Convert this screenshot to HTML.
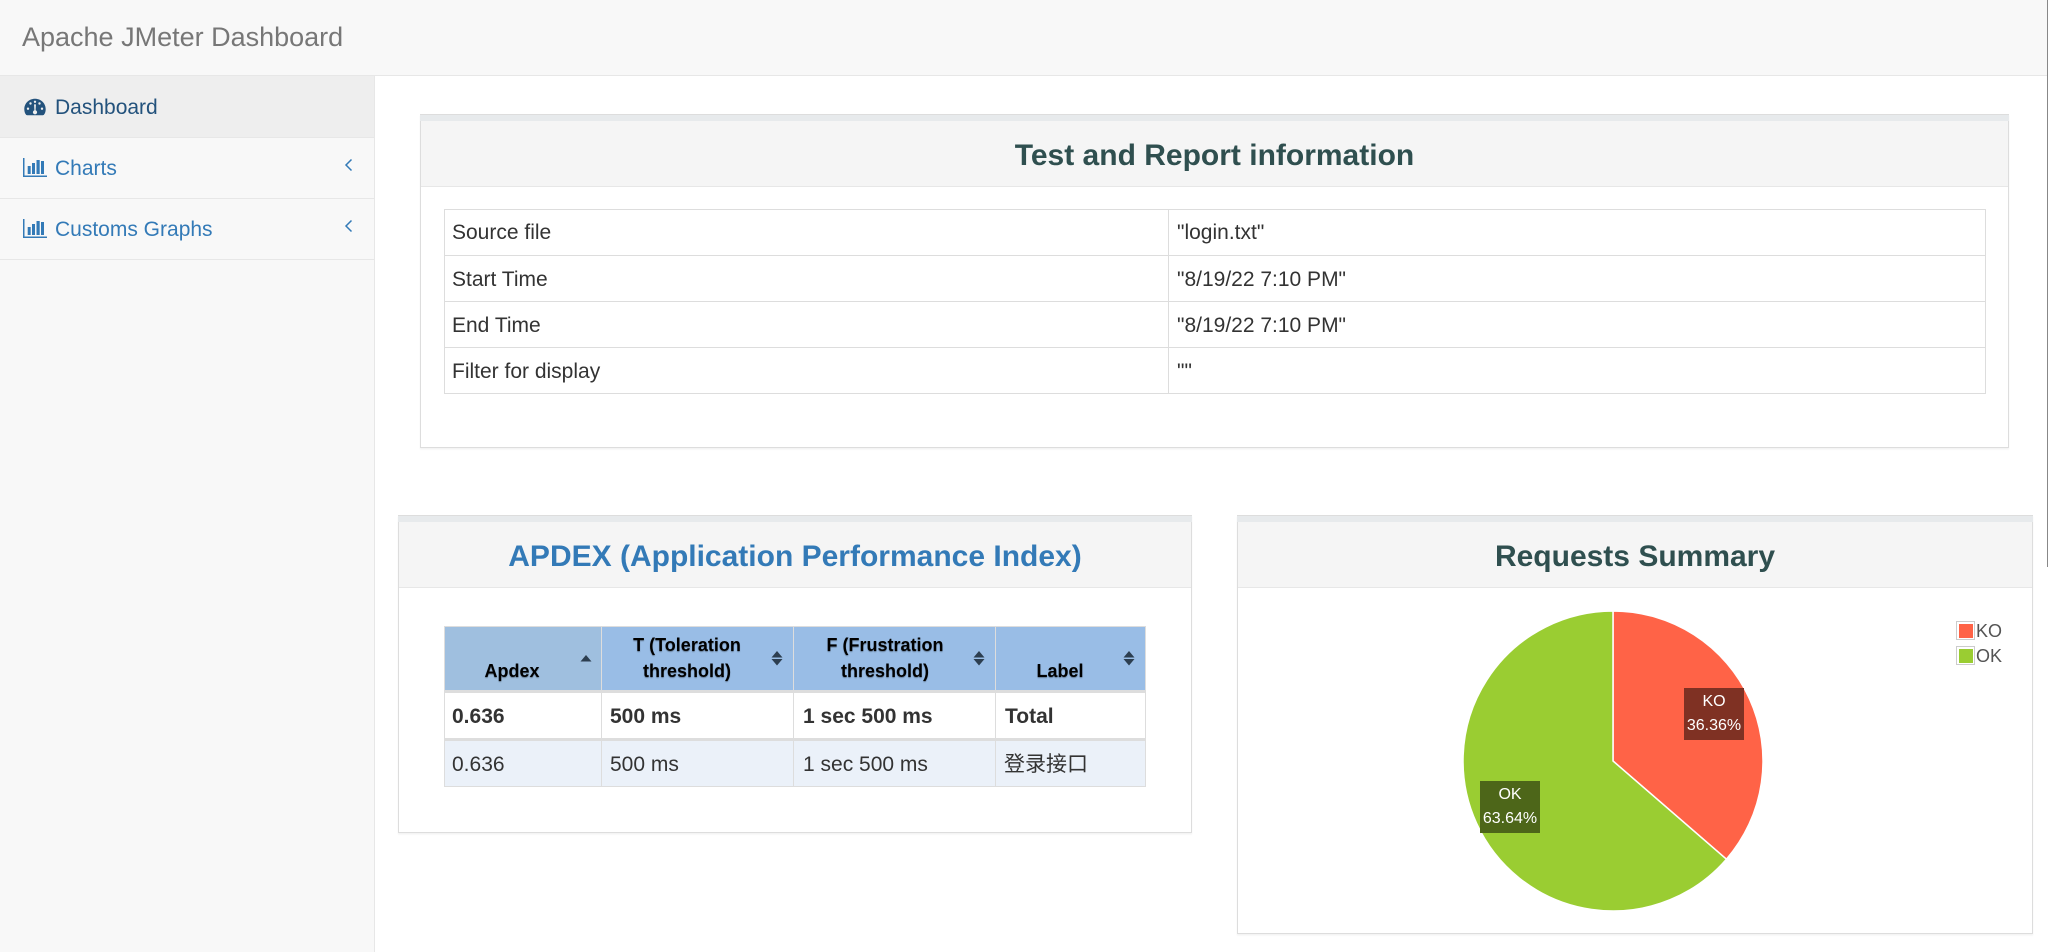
<!DOCTYPE html>
<html><head><meta charset="utf-8"><style>
html,body{margin:0;padding:0;width:2048px;height:952px;overflow:hidden;background:#fff}
body{position:relative;font-family:"Liberation Sans","Noto Sans CJK SC",sans-serif;font-size:21px;color:#333}
.a{position:absolute;box-sizing:border-box}
.t{position:absolute;white-space:nowrap;line-height:30px}
.panel{position:absolute;box-sizing:border-box;background:#fff;border:1px solid #ddd;border-top:0;box-shadow:0 1.5px 1.5px rgba(0,0,0,.05)}
.top{position:absolute;left:-1px;right:-1px;top:0;height:7px;background:#e7eaec;border-top:1px solid #ddd;box-sizing:border-box}
.head{position:absolute;left:0;right:0;top:7px;height:66px;box-sizing:border-box;background:#f5f5f5;border-bottom:1px solid #e7e7e7;text-align:center;font-weight:bold;font-size:30px;line-height:70px;color:#2f4f4f}
.h{position:absolute;background:#ddd;height:1px}
.v{position:absolute;background:#ddd;width:1px}
.th{font-weight:bold;font-size:18px;color:#000;text-shadow:0 1px 1px rgba(0,0,0,.35);line-height:26px;text-align:center;position:absolute}
.lab{position:absolute;color:#fff;font-size:16px;line-height:24px;padding-top:2px;text-align:center;box-sizing:border-box}
</style></head><body>

<div class="a" style="left:0;top:0;width:2048px;height:76px;background:#f8f8f8;border-bottom:1px solid #e7e7e7"></div>
<div class="t" style="left:22px;top:22px;font-size:27px;color:#777">Apache JMeter Dashboard</div>

<div class="a" style="left:0;top:76px;width:375px;height:876px;background:#f8f8f8;border-right:1px solid #e7e7e7"></div>
<div class="a" style="left:0;top:76px;width:374px;height:62px;background:#eee;border-bottom:1px solid #e7e7e7"></div>
<div class="a" style="left:0;top:138px;width:374px;height:61px;border-bottom:1px solid #e7e7e7"></div>
<div class="a" style="left:0;top:199px;width:374px;height:61px;border-bottom:1px solid #e7e7e7"></div>

<svg class="a" style="left:24px;top:98px" width="22" height="18" viewBox="0 0 22 18"><path fill="#23527c" fill-rule="evenodd" d="M11 .8C5 .8.3 5.400.3 11.200c0 2.100.6 4 1.600 5.300.3.5.7.7 1.300.7h15.600c.6 0 1-.2 1.300-.7 1-1.300 1.600-3.200 1.600-5.300C21.700 5.400 17 .8 11 .8zM4 9.500a1.200 1.200 0 1 1 0 2.400 1.200 1.200 0 0 1 0-2.400zM6.500 4.300a1.200 1.200 0 1 1 0 2.400 1.200 1.200 0 0 1 0-2.400zM11 2.600a1.200 1.200 0 1 1 0 2.400 1.200 1.200 0 0 1 0-2.400zM15.500 4.300a1.200 1.200 0 1 1 0 2.400 1.200 1.200 0 0 1 0-2.400zM18 9.500a1.200 1.200 0 1 1 0 2.400 1.200 1.200 0 0 1 0-2.400zM11.900 7l-.3 5.300a2.100 2.100 0 1 1-1.200 0l-.3-5.300a.9.900 0 0 1 1.800 0z"/></svg>
<div class="t" style="left:55px;top:93px;color:#23527c">Dashboard</div>

<svg class="a" style="left:23px;top:157px" width="25" height="21" viewBox="0 0 25 21"><path fill="#337ab7" d="M0 1h1.500v17.500H24V20H0zM4.700 9h3v8h-3zM9 6h3v11H9zM13.500 3h3.200v14h-3.200zM18 4h3v13h-3z"/></svg>
<div class="t" style="left:55px;top:154px;color:#337ab7">Charts</div>
<svg class="a" style="left:343px;top:157px" width="11" height="17" viewBox="0 0 11 17"><path fill="none" stroke="#337ab7" stroke-width="1.500" d="M8.500 2.500 3 8l5.500 5.500"/></svg>

<svg class="a" style="left:23px;top:218px" width="25" height="21" viewBox="0 0 25 21"><path fill="#337ab7" d="M0 1h1.500v17.500H24V20H0zM4.700 9h3v8h-3zM9 6h3v11H9zM13.500 3h3.200v14h-3.200zM18 4h3v13h-3z"/></svg>
<div class="t" style="left:55px;top:215px;color:#337ab7">Customs Graphs</div>
<svg class="a" style="left:343px;top:218px" width="11" height="17" viewBox="0 0 11 17"><path fill="none" stroke="#337ab7" stroke-width="1.500" d="M8.500 2.500 3 8l5.500 5.500"/></svg>

<!-- Test panel -->
<div class="panel" style="left:420px;top:114px;width:1589px;height:334px">
  <div class="top"></div><div class="head">Test and Report information</div>
</div>
<div class="a" style="left:444px;top:209px;width:1542px;height:185px;border:1px solid #ddd"></div>
<div class="h" style="left:444px;top:255px;width:1542px"></div>
<div class="h" style="left:444px;top:301px;width:1542px"></div>
<div class="h" style="left:444px;top:347px;width:1542px"></div>
<div class="v" style="left:1168px;top:209px;height:185px"></div>
<div class="t" style="left:452px;top:218px">Source file</div>
<div class="t" style="left:452px;top:265px">Start Time</div>
<div class="t" style="left:452px;top:311px">End Time</div>
<div class="t" style="left:452px;top:357px">Filter for display</div>
<div class="t" style="left:1177px;top:218px">"login.txt"</div>
<div class="t" style="left:1177px;top:265px">"8/19/22 7:10 PM"</div>
<div class="t" style="left:1177px;top:311px">"8/19/22 7:10 PM"</div>
<div class="t" style="left:1177px;top:357px">""</div>

<!-- APDEX -->
<div class="panel" style="left:398px;top:515px;width:794px;height:318px">
  <div class="top"></div><div class="head" style="color:#337ab7">APDEX (Application Performance Index)</div>
</div>
<div class="a" style="left:445px;top:627px;width:156px;height:63px;background:#9fbfdf"></div>
<div class="a" style="left:602px;top:627px;width:543px;height:63px;background:#99bde6"></div>
<div class="a" style="left:445px;top:741px;width:700px;height:45px;background:#ebf1f9"></div>
<div class="a" style="left:444px;top:626px;width:702px;height:161px;border:1px solid #ddd"></div>
<div class="h" style="left:444px;top:690px;width:702px;height:3px"></div>
<div class="h" style="left:444px;top:738px;width:702px;height:3px"></div>
<div class="v" style="left:601px;top:626px;height:161px"></div>
<div class="v" style="left:793px;top:626px;height:161px"></div>
<div class="v" style="left:995px;top:626px;height:161px"></div>

<div class="th" style="left:445px;top:658px;width:134px">Apdex</div>
<div class="th" style="left:602px;top:632px;width:170px">T (Toleration<br>threshold)</div>
<div class="th" style="left:799px;top:632px;width:172px">F (Frustration<br>threshold)</div>
<div class="th" style="left:996px;top:658px;width:128px">Label</div>

<svg class="a" style="left:580px;top:655px" width="12" height="7"><path fill="#2c3e50" d="M6 0 11.500 6.500H.5z"/></svg>
<svg class="a" style="left:771px;top:651px" width="12" height="15"><path fill="#2c3e50" d="M6 0 11.500 6.500H.5zM.5 8h11L6 14.500z"/></svg>
<svg class="a" style="left:973px;top:651px" width="12" height="15"><path fill="#2c3e50" d="M6 0 11.500 6.500H.5zM.5 8h11L6 14.500z"/></svg>
<svg class="a" style="left:1123px;top:651px" width="12" height="15"><path fill="#2c3e50" d="M6 0 11.500 6.500H.5zM.5 8h11L6 14.500z"/></svg>

<div class="t" style="left:452px;top:702px;font-weight:bold">0.636</div>
<div class="t" style="left:610px;top:702px;font-weight:bold">500 ms</div>
<div class="t" style="left:803px;top:702px;font-weight:bold">1 sec 500 ms</div>
<div class="t" style="left:1005px;top:702px;font-weight:bold">Total</div>
<div class="t" style="left:452px;top:750px">0.636</div>
<div class="t" style="left:610px;top:750px">500 ms</div>
<div class="t" style="left:803px;top:750px">1 sec 500 ms</div>
<div class="t" style="left:1004px;top:750px">登录接口</div>

<!-- Requests -->
<div class="panel" style="left:1237px;top:515px;width:796px;height:418.500px">
  <div class="top"></div><div class="head">Requests Summary</div>
</div>
<svg class="a" style="left:1440px;top:590px" width="340" height="340" viewBox="1440 590 340 340">
  <path fill="#ff6347" stroke="#fff" stroke-width="1.500" stroke-linejoin="round" d="M1613 761V611A150 150 0 0 1 1726.400 859.200Z"/>
  <path fill="#9acd32" stroke="#fff" stroke-width="1.500" stroke-linejoin="round" d="M1613 761L1726.400 859.200A150 150 0 1 1 1613 611Z"/>
</svg>
<div class="lab" style="left:1684px;top:688px;width:60px;height:52px;background:#7f3123">KO<br>36.36%</div>
<div class="lab" style="left:1480px;top:781px;width:60px;height:52px;background:#4d6619">OK<br>63.64%</div>

<div class="a" style="left:1956px;top:621px;width:19px;height:19px;border:1px solid #ccc;padding:1.500px"><div style="width:100%;height:100%;background:#ff6347"></div></div>
<div class="a" style="left:1956px;top:646px;width:19px;height:19px;border:1px solid #ccc;padding:1.500px"><div style="width:100%;height:100%;background:#9acd32"></div></div>
<div class="t" style="left:1976px;top:616px;font-size:18px;color:#545454">KO</div>
<div class="t" style="left:1976px;top:641px;font-size:18px;color:#545454">OK</div>

<div class="a" style="left:2047px;top:0;width:1px;height:567px;background:#888"></div>
</body></html>
